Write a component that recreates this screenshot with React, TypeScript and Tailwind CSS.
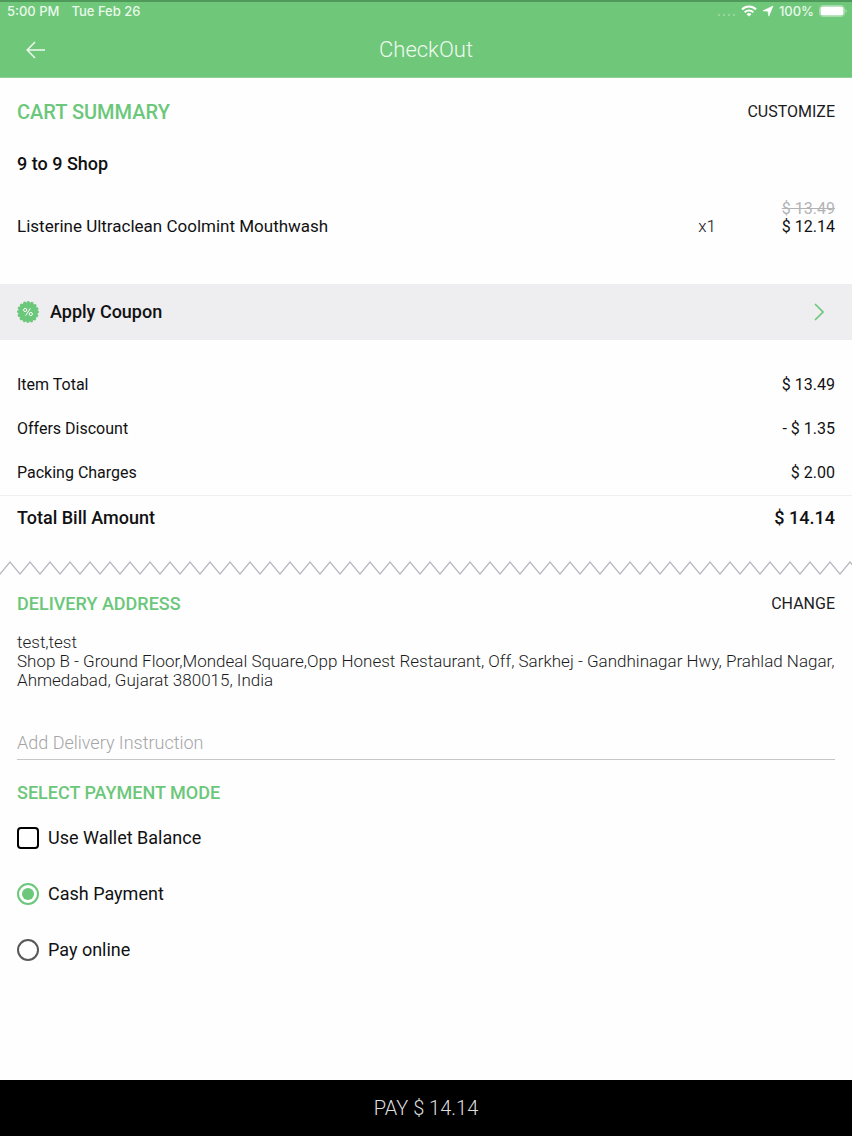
import React, { useState } from 'react'

interface BillLine {
  id: string
  label: string
  amount: string
}

interface ActionHeadingProps {
  title: string
  action: string
  className?: string
  titleClassName?: string
}

interface PaymentOptionProps {
  id: string
  label: string
  checked: boolean
  onSelect: () => void
}

const billLines: BillLine[] = [
  { id: 'item-total', label: 'Item Total', amount: '$ 13.49' },
  { id: 'offers', label: 'Offers Discount', amount: '- $ 1.35' },
  { id: 'packing', label: 'Packing Charges', amount: '$ 2.00' }
]

const StatusBar: React.FC = () => (
  <div className="flex h-[22px] items-center justify-between border-t-2 border-[#4f9a5a] pr-[5px] pb-0.5 pl-[7px] font-['Inter',sans-serif] text-[13px] leading-[18px] font-medium text-[#e9f8ea]">
    <div className="flex gap-3">
      <span>5:00 PM</span>
      <span>Tue Feb 26</span>
    </div>
    <div className="flex items-center gap-[5px]">
      <svg width="20" height="12" viewBox="0 0 20 12" fill="#95d59a">
        <circle cx="3" cy="10" r="1.2" />
        <circle cx="8" cy="10" r="1.2" />
        <circle cx="13" cy="10" r="1.2" />
        <circle cx="18" cy="10" r="1.2" />
      </svg>
      {/* Wifi */}
      <svg width="16" height="12" viewBox="0 0 16 12" fill="none" stroke="white" strokeWidth="2.1">
        <path d="M1 4.4a10 10 0 0 1 14 0" />
        <path d="M3.7 7.2a6.1 6.1 0 0 1 8.6 0" />
        <path d="M8 11.6 5.6 9.2a3.4 3.4 0 0 1 4.8 0Z" fill="white" stroke="none" />
      </svg>
      {/* Location */}
      <svg width="12" height="12" viewBox="0 0 12 12" fill="white" stroke="white" strokeWidth="0.6">
        <path d="M11 1 6.8 11.2 6 6.2 1 5.8Z" />
      </svg>
      <span>100%</span>
      {/* Battery */}
      <svg width="28" height="12" viewBox="0 0 28 12">
        <rect x="0.5" y="0.5" width="25" height="11" rx="3" fill="none" stroke="#a6dda9" />
        <rect x="1.5" y="1.5" width="23" height="9" rx="2" fill="white" />
        <path d="M26.5 4v4a2.2 2.2 0 0 0 0-4Z" fill="#a6dda9" />
      </svg>
    </div>
  </div>
)

const ActionHeading: React.FC<ActionHeadingProps> = ({ title, action, className = '', titleClassName = '' }) => (
  <div className={`flex items-center justify-between px-[17px] ${className}`}>
    <h2 className={`font-medium text-[#6bc77a] ${titleClassName}`}>{title}</h2>
    <button type="button" className="text-base text-[#1b1b1d]">{action}</button>
  </div>
)

const ZigZag: React.FC = () => (
  <svg className="block h-4 w-full" fill="none" aria-hidden="true">
    <defs>
      <pattern id="zigzag" width="20" height="16" patternUnits="userSpaceOnUse">
        <path d="M-1 15.2 0 14 10 2 20 14 21 15.2M-1 12.8 0 14M20 14 21 12.8" stroke="#b9b6c0" strokeWidth="1.2" />
      </pattern>
    </defs>
    <rect width="100%" height="16" fill="url(#zigzag)" />
  </svg>
)

const PaymentOption: React.FC<PaymentOptionProps> = ({ id, label, checked, onSelect }) => (
  <label htmlFor={id} className="flex h-14 items-center gap-[9px] text-lg">
    <span className="grid place-items-center">
      <input
        id={id}
        type="radio"
        name="payment"
        checked={checked}
        onChange={onSelect}
        className="peer col-start-1 row-start-1 size-[22px] appearance-none rounded-full border-2 border-[#58585a] checked:border-[#6bc77a]"
      />
      <span className="pointer-events-none col-start-1 row-start-1 hidden size-3 rounded-full bg-[#6bc77a] peer-checked:block" />
    </span>
    {label}
  </label>
)

const App: React.FC = () => {
  const [useWallet, setUseWallet] = useState(false)
  const [payment, setPayment] = useState('cash')
  const [instruction, setInstruction] = useState('')

  return (
    <div className="flex min-h-screen flex-col bg-[#fefefe] font-['Roboto',sans-serif] text-[#111113]">
      {/* Header */}
      <header className="border-b border-[#8fcf98] bg-[#6fc77a]">
        <StatusBar />
        <div className="grid h-[55px] grid-cols-[1fr_auto_1fr] items-center">
          <button type="button" aria-label="Back" className="ml-[26px] justify-self-start">
            <svg width="20" height="18" viewBox="0 0 20 18" fill="none" stroke="#eefaef" strokeWidth="1.5">
              <path d="M19 9H1.5M9 1 1.2 9 9 17" />
            </svg>
          </button>
          <h1 className="text-[22px] font-light text-[#eefaef]">CheckOut</h1>
        </div>
      </header>

      <main className="flex-1">
        {/* Cart */}
        <section>
          <ActionHeading title="CART SUMMARY" action="CUSTOMIZE" className="h-[68px]" titleClassName="text-xl" />
          <h3 className="px-[17px] text-lg leading-9 font-medium">9 to 9 Shop</h3>
          <div className="flex items-end px-[17px] pt-[18px] pb-12 text-[17px] leading-5">
            <span className="flex-1">Listerine Ultraclean Coolmint Mouthwash</span>
            <span className="font-light">x1</span>
            <div className="w-[119px] text-right text-base leading-[18px]">
              <del className="block text-[#b3b3b6]">$ 13.49</del>
              <span className="block">$ 12.14</span>
            </div>
          </div>
        </section>

        {/* Coupon */}
        <button type="button" className="flex h-14 w-full items-center bg-[#eeedef] px-[17px] text-lg font-medium">
          <svg width="22" height="22" viewBox="0 0 22 22" className="mr-[11px]">
            <circle cx="11" cy="11" r="9.8" fill="#6bc77a" />
            <circle cx="11" cy="11" r="9.5" fill="none" stroke="#6bc77a" strokeWidth="3" strokeLinecap="round" strokeDasharray="0.1 3.63" />
            <g fill="none" stroke="white" strokeWidth="1">
              <circle cx="8.2" cy="9" r="1.6" />
              <circle cx="13.8" cy="13" r="1.6" />
              <path d="M13.4 7.4 8.6 14.6" />
            </g>
          </svg>
          Apply Coupon
          <svg width="10" height="18" viewBox="0 0 10 18" fill="none" stroke="#6bc77a" strokeWidth="1.6" className="mr-[11px] ml-auto">
            <path d="M1 1 9 9 1 17" />
          </svg>
        </button>

        {/* Bill */}
        <table className="mt-[23px] w-full text-base">
          <tbody>
            {billLines.map((line) => (
              <tr key={line.id} className="h-11">
                <th scope="row" className="pl-[17px] text-left font-normal">{line.label}</th>
                <td className="pr-[17px] text-right">{line.amount}</td>
              </tr>
            ))}
            <tr className="h-[46px] border-t border-[#efeff1] text-lg font-medium">
              <th scope="row" className="pl-[17px] text-left font-medium">Total Bill Amount</th>
              <td className="pr-[17px] text-right">$ 14.14</td>
            </tr>
          </tbody>
        </table>

        <div className="pt-[19px]">
          <ZigZag />
        </div>

        {/* Delivery */}
        <section>
          <ActionHeading title="DELIVERY ADDRESS" action="CHANGE" className="h-[55px]" titleClassName="text-lg" />
          <address className="px-[17px] pt-[2px] text-[17px] leading-[19px] font-light text-[#1b1b1d] not-italic">
            test,test
            <br />
            Shop B - Ground Floor,Mondeal Square,Opp Honest Restaurant, Off, Sarkhej - Gandhinagar Hwy, Prahlad Nagar, Ahmedabad, Gujarat 380015, India
          </address>
          <div className="px-[17px] pt-9">
            <input
              type="text"
              aria-label="Add Delivery Instruction"
              placeholder="Add Delivery Instruction"
              value={instruction}
              onChange={(e) => setInstruction(e.target.value)}
              className="block h-[34px] w-full border-b border-[#c6c6c8] text-lg font-light outline-none placeholder:text-[#a5a5a8]"
            />
          </div>
        </section>

        {/* Payment */}
        <section className="px-[17px]">
          <h2 className="pt-5 text-lg leading-[26px] font-medium text-[#6bc77a]">SELECT PAYMENT MODE</h2>
          <div className="pt-1">
            <label htmlFor="wallet" className="flex h-14 items-center gap-[9px] text-lg">
              <input
                id="wallet"
                type="checkbox"
                checked={useWallet}
                onChange={(e) => setUseWallet(e.target.checked)}
                className="size-[22px] appearance-none rounded border-2 border-black checked:bg-[#6bc77a]"
              />
              Use Wallet Balance
            </label>
            <PaymentOption id="cash" label="Cash Payment" checked={payment === 'cash'} onSelect={() => setPayment('cash')} />
            <PaymentOption id="online" label="Pay online" checked={payment === 'online'} onSelect={() => setPayment('online')} />
          </div>
        </section>
      </main>

      <button type="button" className="h-14 w-full bg-black text-xl font-light text-[#dededf]">PAY $ 14.14</button>
    </div>
  )
}

export default App
